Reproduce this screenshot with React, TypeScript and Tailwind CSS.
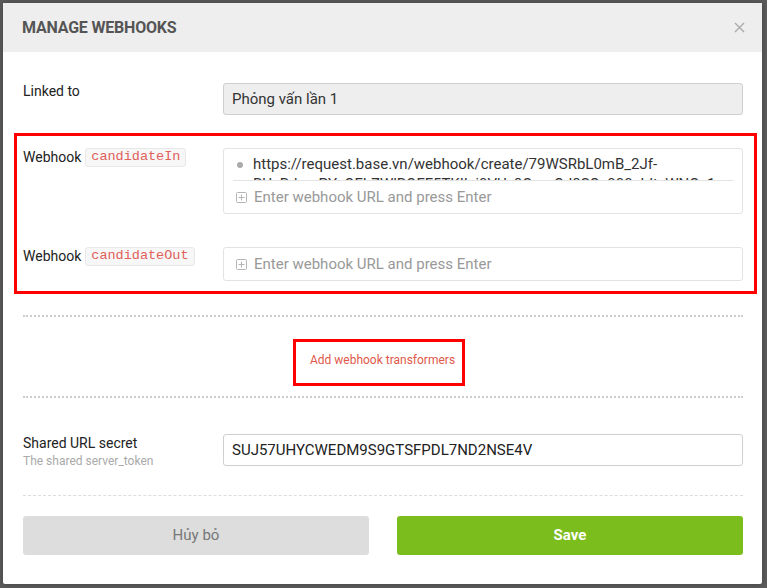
import React from "react";

const PlusBox = () => (
  <svg width="11" height="11" viewBox="0 0 11 11" className="shrink-0">
    <rect x="0.5" y="0.5" width="10" height="10" fill="none" stroke="#b5b5b5" rx="1" />
    <path d="M5.5 2.5v6M2.5 5.5h6" stroke="#b5b5b5" />
  </svg>
);

const Placeholder = () => (
  <div className="flex h-[32px] items-center gap-[7px] pl-[12px] text-[15px] text-[#999]">
    <PlusBox />
    <span>Enter webhook URL and press Enter</span>
  </div>
);

const Code = ({ children }: { children: React.ReactNode }) => (
  <span
    className="ml-[4px] inline-flex h-[19px] items-center rounded-[3px] border border-[#e8e8e8] bg-[#f7f7f7] px-[5px] text-[13.5px] text-[#e0605a]"
    style={{ fontFamily: '"Courier New", "Liberation Mono", monospace' }}
  >
    {children}
  </span>
);

export default function App() {
  return (
    <div
      className="h-[588px] w-full overflow-hidden bg-[#5c5c5c] pl-[3px] pt-[3px]"
      style={{ fontFamily: 'Roboto, "Noto Sans", sans-serif' }}
    >
      <div className="w-[759px] rounded-[2px] bg-white shadow-[0_0_6px_rgba(0,0,0,0.3)]">
        <div className="flex h-[49px] items-center justify-between bg-[#eeeeee] pl-[19px] pr-[17px]">
          <span className="text-[16px] font-bold tracking-[-0.2px] text-[#555]">MANAGE WEBHOOKS</span>
          <svg width="11" height="11" viewBox="0 0 11 11">
            <path d="M1 1l9 9M10 1l-9 9" stroke="#aaa" strokeWidth="1.4" />
          </svg>
        </div>

        <div className="pb-[29px] pl-[20px] pr-[19px] pt-[31px] text-[#222]">
          <div className="flex">
            <div className="w-[200px] text-[14px] leading-[16px]">Linked to</div>
            <div className="flex h-[32px] flex-1 items-center rounded-[3px] border border-[#cfcfcf] bg-[#eeeeee] pl-[8px] text-[15px] text-[#333]">
              Phỏng vấn lần 1
            </div>
          </div>

          <div className="-ml-[9px] -mr-[14px] mt-[18px] border-[3px] border-[#ff0000] pb-[10px] pl-[6px] pr-[11px] pt-[12px]">
            <div className="flex">
              <div className="flex h-[19px] w-[200px] items-center text-[14px]">
                Webhook<Code>candidateIn</Code>
              </div>
              <div className="flex-1 rounded-[3px] border border-[#e3e3e3]">
                <div className="mx-[9px] h-[32px] overflow-hidden border-b border-[#e3e3e3] pt-[5px]">
                  <div className="flex items-start">
                    <span className="mt-[8px] ml-[4px] mr-[10px] h-[6px] w-[6px] shrink-0 rounded-full bg-[#aaa]"></span>
                    <span className="min-w-0 break-words text-[15px] leading-[20px] text-[#333]">
                      https://request.base.vn/webhook/create/79WSRbL0mB_2Jf-RUsRdmcPYsQFLZWlROFF5TKIIxj0VUy8QmeOJ8SQz000sIdtzWNQz1
                    </span>
                  </div>
                </div>
                <Placeholder />
              </div>
            </div>
            <div className="mt-[33px] flex">
              <div className="flex h-[19px] w-[200px] items-center text-[14px]">
                Webhook<Code>candidateOut</Code>
              </div>
              <div className="flex-1 rounded-[3px] border border-[#e3e3e3]">
                <Placeholder />
              </div>
            </div>
          </div>

          <div className="mt-[21px] h-0 border-t-2 border-dotted border-[#cccccc]"></div>

          <div className="mt-[22px] flex justify-center">
            <div className="mr-[8px] border-[3px] border-[#ff0000] pb-[15px] pl-[14px] pr-[7px] pt-[11px] text-[12px] leading-[15px] text-[#e0584a]">
              Add webhook transformers
            </div>
          </div>

          <div className="mt-[10px] h-0 border-t-2 border-dotted border-[#cccccc]"></div>

          <div className="mt-[36px] flex">
            <div className="w-[200px]">
              <div className="pt-[1px] text-[14px] leading-[16px]">Shared URL secret</div>
              <div className="mt-[3px] text-[12px] leading-[14px] text-[#aaa]">The shared server_token</div>
            </div>
            <div className="flex h-[32px] flex-1 items-center rounded-[3px] border border-[#cfcfcf] pl-[8px] text-[15px] text-[#222]">
              SUJ57UHYCWEDM9S9GTSFPDL7ND2NSE4V
            </div>
          </div>

          <div className="mt-[27px] h-0 border-t border-dashed border-[#dddddd]"></div>

          <div className="mt-[20px] grid grid-cols-2 gap-[28px]">
            <button className="flex h-[39px] items-center justify-center rounded-[3px] bg-[#dddddd] text-[15px] text-[#777]">
              Hủy bỏ
            </button>
            <button className="flex h-[39px] items-center justify-center rounded-[3px] bg-[#7cbd1e] text-[15px] font-bold text-white">
              Save
            </button>
          </div>
        </div>
      </div>
    </div>
  );
}
